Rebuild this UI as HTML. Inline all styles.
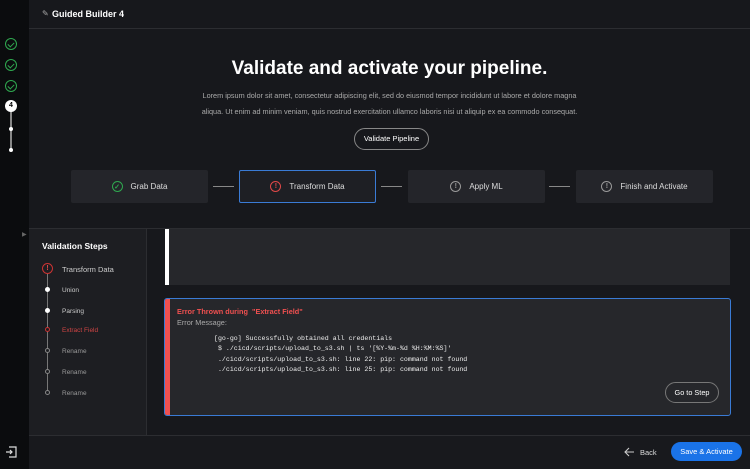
<!DOCTYPE html>
<html><head><style>
*{margin:0;padding:0;box-sizing:border-box}
body{width:750px;height:469px;background:#17181c;font-family:"Liberation Sans",sans-serif;color:#fff;position:relative;overflow:hidden}
.abs{position:absolute}
.rail{left:0;top:0;width:29px;height:469px;background:#0b0c0e}
.hdr{left:29px;top:0;width:721px;height:29px;border-bottom:1px solid #2c2d31;background:#17181c}
.chk{left:5px;width:12px;height:12px;border:1.2px solid #2fa84f;border-radius:50%}
.chk:after{content:"";position:absolute;left:3px;top:2px;width:3px;height:5px;border:solid #2fa84f;border-width:0 1.2px 1.2px 0;transform:rotate(45deg)}
.step{top:170px;height:33px;width:137px;background:#24252a;border-radius:2px;font-size:8px;color:#ddd;display:flex;align-items:center;justify-content:center;gap:8px}
.ic{width:11px;height:11px;border:1px solid #999;border-radius:50%;font-size:7px;display:flex;align-items:center;justify-content:center;font-weight:bold;color:#999}
.dash{top:186px;width:21px;height:1px;background:#888}
.vs{font-size:7px;color:#ccc;left:62px}
.dot{left:45px;width:5px;height:5px;border-radius:50%}
pre{font-family:"Liberation Mono",monospace;font-size:6.6px;line-height:10.3px;color:#eee}
</style></head><body>
<div class="abs rail"></div>
<div class="abs hdr"></div>
<div class="abs" style="left:42px;top:9px;font-size:8px;color:#aaa">✎</div>
<div class="abs" style="left:52px;top:9px;font-size:9px;font-weight:bold">Guided Builder 4</div>
<div class="abs chk" style="top:38px"></div>
<div class="abs chk" style="top:59px"></div>
<div class="abs chk" style="top:80px"></div>
<div class="abs" style="left:10px;top:105px;width:2px;height:46px;background:#888"></div>
<div class="abs" style="left:5px;top:100px;width:12px;height:12px;border-radius:50%;background:#fff;color:#000;font-size:7px;font-weight:bold;text-align:center;line-height:12px">4</div>
<div class="abs" style="left:9px;top:127px;width:4px;height:4px;border-radius:50%;background:#fff"></div>
<div class="abs" style="left:9px;top:148px;width:4px;height:4px;border-radius:50%;background:#fff"></div>
<div class="abs" style="left:22px;top:231px;font-size:6px;color:#666">▶</div>
<svg class="abs" style="left:5px;top:446px" width="12" height="12" viewBox="0 0 12 12" fill="none" stroke="#ddd" stroke-width="1.2"><path d="M4 1h7v10H4M1 6h6M5 4l2 2-2 2"/></svg>

<div class="abs" style="left:29px;top:58px;width:721px;text-align:center;font-size:19px;font-weight:bold">Validate and activate your pipeline.</div>
<div class="abs" style="left:29px;top:88px;width:721px;text-align:center;font-size:7.3px;line-height:16px;color:#aaa">Lorem ipsum dolor sit amet, consectetur adipiscing elit, sed do eiusmod tempor incididunt ut labore et dolore magna<br>aliqua. Ut enim ad minim veniam, quis nostrud exercitation ullamco laboris nisi ut aliquip ex ea commodo consequat.</div>
<div class="abs" style="left:354px;top:128px;width:75px;height:22px;border:1px solid #888;border-radius:11px;font-size:7.5px;text-align:center;line-height:20px">Validate Pipeline</div>

<div class="abs step" style="left:71px"><div class="ic" style="border-color:#2fa84f;color:#2fa84f">✓</div>Grab Data</div>
<div class="abs dash" style="left:213px"></div>
<div class="abs step" style="left:239px;border:1px solid #3a7bd5;background:#1e1f24"><div class="ic" style="border-color:#e04848;color:#e04848">!</div>Transform Data</div>
<div class="abs dash" style="left:381px"></div>
<div class="abs step" style="left:408px"><div class="ic">!</div>Apply ML</div>
<div class="abs dash" style="left:549px"></div>
<div class="abs step" style="left:576px"><div class="ic">!</div>Finish and Activate</div>

<div class="abs" style="left:29px;top:228px;width:721px;height:1px;background:#2c2d31"></div>
<div class="abs" style="left:29px;top:229px;width:118px;height:206px;background:#1d1e22;border-right:1px solid #2c2d31"></div>
<div class="abs" style="left:42px;top:241px;font-size:8.5px;font-weight:bold">Validation Steps</div>
<div class="abs" style="left:47px;top:274px;width:1px;height:118px;background:#777"></div>
<div class="abs" style="left:42px;top:263px;width:11px;height:11px;border:1px solid #c33;border-radius:50%;background:#1d1e22;color:#e04848;font-size:7px;text-align:center;line-height:9px;font-weight:bold">!</div>
<div class="abs vs" style="top:265px;font-size:7.5px">Transform Data</div>
<div class="abs dot" style="top:287px;background:#fff"></div><div class="abs vs" style="top:287px;font-size:6.5px">Union</div>
<div class="abs dot" style="top:308px;background:#fff"></div><div class="abs vs" style="top:308px;font-size:6.5px">Parsing</div>
<div class="abs dot" style="top:327px;border:1px solid #c33;background:#1d1e22"></div><div class="abs vs" style="top:327px;font-size:6.5px;color:#d04444">Extract Field</div>
<div class="abs dot" style="top:348px;border:1px solid #888;background:#1d1e22"></div><div class="abs vs" style="top:348px;font-size:6.5px;color:#999">Rename</div>
<div class="abs dot" style="top:369px;border:1px solid #888;background:#1d1e22"></div><div class="abs vs" style="top:369px;font-size:6.5px;color:#999">Rename</div>
<div class="abs dot" style="top:390px;border:1px solid #888;background:#1d1e22"></div><div class="abs vs" style="top:390px;font-size:6.5px;color:#999">Rename</div>

<div class="abs" style="left:165px;top:229px;width:565px;height:56px;background:#26272b"></div>
<div class="abs" style="left:165px;top:229px;width:4px;height:56px;background:#fff"></div>

<div class="abs" style="left:164px;top:298px;width:567px;height:118px;background:#26272b;border:1px solid #3a7bd5;border-radius:3px;overflow:hidden">
 <div class="abs" style="left:0;top:0;width:5px;height:118px;background:#f05050"></div>
 <div class="abs" style="left:12px;top:8px;font-size:7.3px;font-weight:bold;color:#f05050">Error Thrown during &nbsp;"Extract Field"</div>
 <div class="abs" style="left:12px;top:19px;font-size:7.3px;color:#aaa">Error Message:</div>
 <pre class="abs" style="left:49px;top:35px">[go-go] Successfully obtained all credentials
 $ ./cicd/scripts/upload_to_s3.sh | ts '[%Y-%m-%d %H:%M:%S]'
 ./cicd/scripts/upload_to_s3.sh: line 22: pip: command not found
 ./cicd/scripts/upload_to_s3.sh: line 25: pip: command not found</pre>
 <div class="abs" style="left:500px;top:83px;width:54px;height:21px;border:1px solid #777;border-radius:11px;font-size:7.3px;text-align:center;line-height:19px">Go to Step</div>
</div>

<div class="abs" style="left:29px;top:435px;width:721px;height:1px;background:#2c2d31"></div>
<div class="abs" style="left:29px;top:436px;width:721px;height:33px;background:#18191d"></div>
<svg class="abs" style="left:624px;top:447px" width="11" height="10" viewBox="0 0 11 10" fill="none" stroke="#ccc" stroke-width="1.1"><path d="M10 5H1M5 1L1 5l4 4"/></svg>
<div class="abs" style="left:640px;top:448px;font-size:7.5px;color:#ddd">Back</div>
<div class="abs" style="left:671px;top:442px;width:71px;height:19px;border-radius:10px;background:#1a73e8;font-size:7.5px;text-align:center;line-height:19px;color:#fff">Save &amp; Activate</div>
</body></html>
